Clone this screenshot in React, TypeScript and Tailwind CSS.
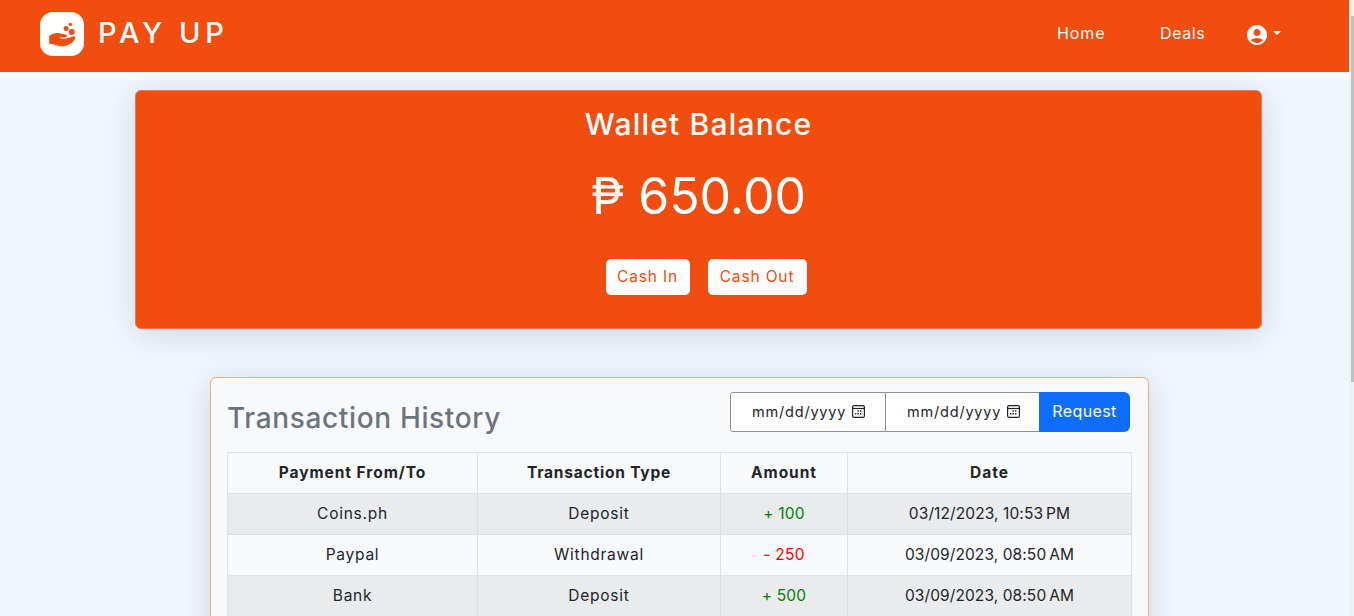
import type { ReactNode } from "react";
import { MdAccountCircle } from "react-icons/md";

type Transaction = { party: string; type: string; amount: string; credit: boolean; date: string };

const transactions: Transaction[] = [
  { party: "Coins.ph", type: "Deposit", amount: "+ 100", credit: true, date: "03/12/2023, 10:53\u202fPM" },
  { party: "Paypal", type: "Withdrawal", amount: "- 250", credit: false, date: "03/09/2023, 08:50\u202fAM" },
  { party: "Bank", type: "Deposit", amount: "+ 500", credit: true, date: "03/09/2023, 08:50\u202fAM" },
];

function Logo() {
  return (
    <svg className="size-11 shrink-0" viewBox="0 0 44 44" aria-hidden="true">
      <rect width="44" height="44" rx="13" fill="#fff" />
      <g fill="#f14d0f">
        <circle cx="30.4" cy="12.4" r="1.7" />
        <circle cx="26.1" cy="16.4" r="2.5" />
        <circle cx="31.7" cy="20.1" r="3" />
        <path d="M9.200 24C12 21.500 17 20.500 20 21.400c3 .9 7 .4 7 2.300 0 1.500-3 1.600-7.200 1.900C21 27.600 27 26.700 31 25c3-1.300 5-.6 4.300 1.200C34 30 28 34.300 22 34.300c-5 0-8-2.700-12.800-2.600Z" />
      </g>
    </svg>
  );
}

function CalendarIcon() {
  return (
    <svg className="ml-1.5 size-[13px] shrink-0" viewBox="0 0 13 13" fill="none" aria-hidden="true">
      <rect x="0.6" y="0.6" width="11.8" height="11.8" rx="1.500" stroke="#222" strokeWidth="1.200" />
      <path d="M1 3.500h11" stroke="#222" strokeWidth="1.200" />
      <path d="M5.500 6h1.400M8 6h1.400M3 8.800h1.400M5.500 8.800h1.400M8 8.800h1.400" stroke="#222" strokeWidth="1.500" />
    </svg>
  );
}

function DateField({ className }: { className: string }) {
  return (
    <div className={`flex h-10 items-center border border-[#8f8f8f] bg-white pb-px text-[14.5px] text-[#212529] ${className}`}>
      <span className="w-[94px] shrink-0 whitespace-nowrap tracking-[0.8px]">mm/dd/yyyy</span>
      <CalendarIcon />
    </div>
  );
}

function CashButton({ className, children }: { className: string; children: ReactNode }) {
  return (
    <button className={`h-9 rounded-[5px] bg-[#fbfdfe] pb-px text-center text-[15.5px] tracking-[0.85px] whitespace-nowrap text-[#f14d0f] ${className}`}>
      {children}
    </button>
  );
}

export default function App() {
  return (
    <div className="flex h-[616px] w-[1354px] overflow-hidden bg-[#f1f5fe] font-['Inter','Liberation_Sans',sans-serif] text-[15.5px] text-[#212529]">
      <div className="flex w-[1349px] shrink-0 flex-col">
        <header className="relative z-10 flex h-[72px] shrink-0 items-center bg-[#f14d0f] pr-[68px] pb-1 pl-10 text-white">
          <Logo />
          <span className="ml-[14px] pb-1 text-[29px] leading-none font-medium tracking-[4.6px]">PAY UP</span>
          <nav className="ml-auto flex items-center text-[16px] leading-6">
            <a className="w-[103px] pb-0.5 tracking-[0.9px]">Home</a>
            <a className="w-[85px] pb-0.5 tracking-[0.6px]">Deals</a>
            <a className="flex items-center">
              <MdAccountCircle className="mt-0.5 size-6" />
              <span className="mb-0.5 ml-1 border-x-4 border-t-4 border-x-transparent border-t-white" />
            </a>
          </nav>
        </header>
        <div className="h-2 shrink-0 bg-[#f8f9fa]" />

        <main className="flex flex-col">
          <section className="mt-[10px] ml-[135px] flex h-[239px] w-[1127px] shrink-0 flex-col items-center rounded-md border border-[#ee7a52] bg-[#f14d0f] text-white shadow-[0_5px_32px_rgba(0,0,0,0.13)]">
            <h2 className="mt-[15px] text-[30px] leading-9 font-medium tracking-[1.2px]">Wallet Balance</h2>
            <p className="mt-[24px] text-[50px] leading-[60px]">₱ 650.00</p>
            <div className="mt-[33px] flex gap-[18px] pl-[15px]">
              <CashButton className="w-[84px]">Cash In</CashButton>
              <CashButton className="w-[99px]">Cash Out</CashButton>
            </div>
          </section>

          <section className="mt-12 ml-[210px] flex h-[400px] w-[939px] shrink-0 flex-col rounded-md border border-[#f3a88c] bg-[#f8f9fb] px-4 shadow-[0_5px_32px_rgba(0,0,0,0.13)]">
            <div className="flex h-[74px] items-start justify-between pr-0.5">
              <h3 className="mt-[22px] text-[28px] leading-9 font-medium tracking-[0.65px] text-[#6c757d]">Transaction History</h3>
              <div className="mt-[14px] flex">
                <DateField className="w-[156px] rounded-l-[3px] pl-[21px]" />
                <DateField className="w-[153px] border-x-0 pl-[21px]" />
                <button className="h-10 w-[91px] rounded-r-md bg-[#0d6efd] pb-0.5 text-[16px] tracking-[0.4px] text-white">Request</button>
              </div>
            </div>
            <table className="w-[905px] table-fixed border-collapse text-center [&_td]:border [&_td]:border-[#dee2e6] [&_th]:border [&_th]:border-[#dee2e6]">
              <colgroup>
                <col className="w-[250px]" />
                <col className="w-[243px]" />
                <col className="w-[127px]" />
                <col className="w-[284px]" />
              </colgroup>
              <thead>
                <tr className="h-[41px] tracking-[0.95px]">
                  <th className="font-bold">Payment From/To</th>
                  <th className="font-bold tracking-[0.8px]">Transaction Type</th>
                  <th className="font-bold">Amount</th>
                  <th className="font-bold">Date</th>
                </tr>
              </thead>
              <tbody>
                {transactions.map((t, i) => (
                  <tr key={i} className="h-[41px] odd:bg-[#eaebed]">
                    <td className="tracking-[0.75px]">{t.party}</td>
                    <td className="tracking-[0.75px]">{t.type}</td>
                    <td className={t.credit ? "tracking-[0.2px] text-[#008000]" : "tracking-[0.3px] text-[#ff0000]"}>{t.amount}</td>
                    <td className="tracking-[0.1px]">{t.date}</td>
                  </tr>
                ))}
              </tbody>
            </table>
          </section>
        </main>
      </div>
      <div className="flex w-[5px] shrink-0 flex-col items-end bg-[#f1f1f1] pt-4">
        <div className="h-[366px] w-[3px] bg-[#c1c1c1]" />
      </div>
    </div>
  );
}
